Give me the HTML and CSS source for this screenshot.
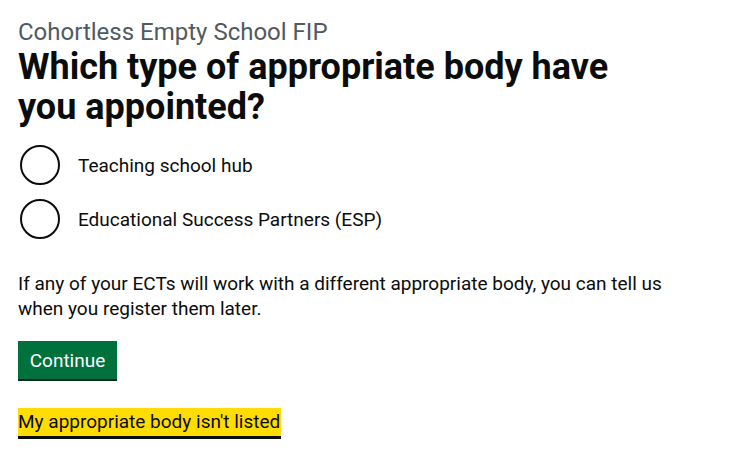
FILE: index.html
```html
<!DOCTYPE html>
<html lang="en">
<head>
<meta charset="utf-8">
<title>Which type of appropriate body have you appointed?</title>
<link rel="stylesheet" href="styles.css">
</head>
<body>
<main class="main">
  <form class="form">
    <fieldset class="fieldset">
      <legend class="legend">
        <span class="caption">Cohortless Empty School FIP</span>
        <h1 class="heading">Which type of appropriate body have you appointed?</h1>
      </legend>
      <div class="radios">
        <div class="radio">
          <input class="radio-input" type="radio" id="ab-1" name="ab">
          <label class="radio-label" for="ab-1">Teaching school hub</label>
        </div>
        <div class="radio">
          <input class="radio-input" type="radio" id="ab-2" name="ab">
          <label class="radio-label" for="ab-2">Educational Success Partners (ESP)</label>
        </div>
      </div>
    </fieldset>
    <p class="body">If any of your ECTs will work with a different appropriate body, you can tell us when you register them later.</p>
    <button class="button" type="button">Continue</button>
    <p class="link-row"><a class="link link-focus" href="#">My appropriate body isn't listed</a></p>
  </form>
</main>
</body>
</html>
```
FILE: styles.css
```css
html, body {
  margin: 0;
  padding: 0;
  background: #ffffff;
}
body {
  font-family: Roboto, "Liberation Sans", Arial, sans-serif;
  color: #0b0c0c;
}
.main {
  padding: 17px 18px 0;
}
.form {
  max-width: 662px;
}
.fieldset {
  margin: 0;
  padding: 0;
  border: 0;
  min-width: 0;
}
.legend {
  padding: 0;
  margin: 0 0 18px;
}
.caption {
  display: block;
  font-size: 24px;
  line-height: 30px;
  color: #505a5f;
  margin-bottom: 0;
}
.heading {
  margin: 0;
  max-width: 620px;
  font-size: 36px;
  line-height: 40px;
  font-weight: 700;
}
.radios {
  display: flex;
  flex-direction: column;
  gap: 14px;
}
.radio {
  display: flex;
  align-items: center;
  min-height: 40px;
}
.radio-input {
  appearance: none;
  -webkit-appearance: none;
  margin: 0 0 0 2px;
  width: 40px;
  height: 40px;
  border: 2px solid #0b0c0c;
  border-radius: 50%;
  box-sizing: border-box;
  background: #fff;
  flex: none;
}
.radio-label {
  font-size: 19px;
  line-height: 25px;
  padding: 5px 15px 5px 18px;
}
.body {
  font-size: 19px;
  line-height: 25px;
  margin: 32px 0 20px;
}
.button {
  display: block;
  font-family: inherit;
  font-size: 19px;
  line-height: 19px;
  color: #fff;
  background: #00703c;
  border: 0;
  border-radius: 0;
  width: 99px;
  padding: 10px 0 9px;
  text-align: center;
  box-shadow: 0 2px 0 #002d18;
  margin: 0 0 29px;
  cursor: pointer;
}
.link-row {
  font-size: 19px;
  line-height: 25px;
  margin: 0;
}
.link {
  color: #0b0c0c;
  text-decoration: none;
}
.link-focus {
  display: inline-block;
  background: #ffdd00;
  padding: 1px 1px 2px 0;
  border-bottom: 3px solid #0b0c0c;
  outline: 3px solid transparent;
}
```
